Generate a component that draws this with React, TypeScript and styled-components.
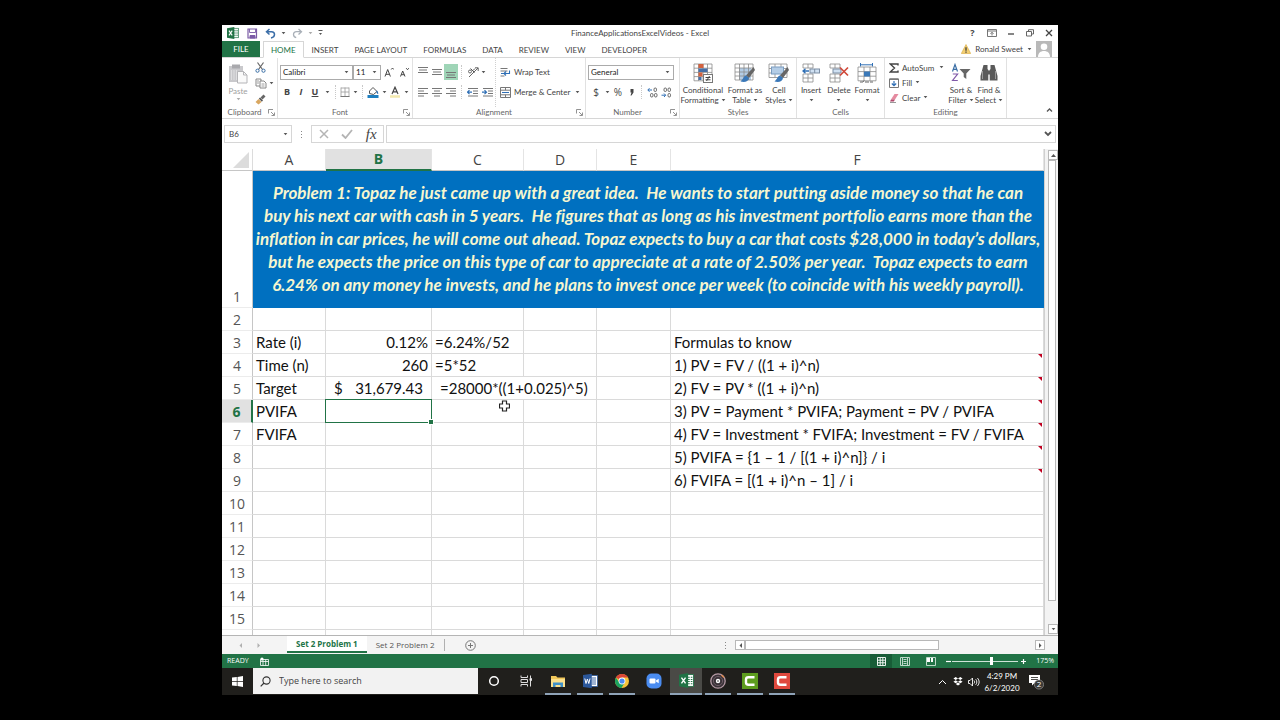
import React from 'react';
import styled, { createGlobalStyle, css } from 'styled-components';

const ribbonFont = "Lato, 'Open Sans', sans-serif";
const uiFont = "'Open Sans', 'Noto Sans', sans-serif";
const green = '#217346';
const line = '#d6d6d6';

const Global = createGlobalStyle`
  *, *::before, *::after { box-sizing: border-box; }
  body { margin: 0; background: #000; font-family: ${ribbonFont}; }
  button, input, select { font: inherit; color: inherit; border: 0; padding: 0; margin: 0; background: none; border-radius: 0; outline: 0; }
  button { cursor: pointer; }
  svg { display: block; flex: none; }
`;

/* ---------- window frame ---------- */

const Screen = styled.main`
  display: flex;
  height: 100vh;
  padding: 25px 222px;
`;

const Desktop = styled.div`
  flex: 1;
  min-width: 0;
  display: flex;
  flex-direction: column;
  background: #fff;
  color: #444;
  font-size: 8px;
  line-height: 10px;
`;

const TitleBar = styled.header`
  display: grid;
  grid-template-columns: 1fr auto 1fr;
  align-items: center;
  height: 16px;
`;

const Title = styled.h1`
  margin: 0;
  font-size: 8px;
  font-weight: 400;
  line-height: 16px;
`;

const QuickAccess = styled.div`
  display: flex;
  align-items: center;
  gap: 2px;
  padding-left: 4px;
`;

const WindowControls = styled.div`
  display: flex;
  justify-content: flex-end;
`;

const Tool = styled.button<{ $w?: number; $active?: boolean; $dim?: boolean }>`
  width: ${p => p.$w ?? 14}px;
  height: 16px;
  display: flex;
  align-items: center;
  justify-content: center;
  background: ${p => (p.$active ? '#9fd5b7' : 'transparent')};
  color: ${p => (p.$dim ? '#b4b4b4' : '#444')};
`;

const GlyphTool = styled(Tool)`
  font-family: ${uiFont};
  font-size: 10px;
`;

const LetterTool = styled(Tool)`
  font-family: ${uiFont};
  font-size: 9px;
`;

/* ---------- ribbon tabs ---------- */

const TabStrip = styled.nav`
  display: flex;
  height: 17px;
  border-bottom: 1px solid ${line};
`;

const FileTab = styled.button`
  width: 38px;
  margin-right: 3px;
  background: ${green};
  color: #fff;
`;

const RibbonTab = styled.button<{ $on?: boolean }>`
  height: 17px;
  padding: 0 7px;
  white-space: nowrap;
  border: 1px solid transparent;
  ${p => p.$on && css`
    color: ${green};
    background: #fff;
    border-color: ${line} ${line} #fff;
  `}
`;

const Account = styled.button`
  display: flex;
  align-items: center;
  gap: 4px;
  height: 16px;
  margin-left: auto;
  padding-right: 6px;
`;

/* ---------- ribbon ---------- */

const Ribbon = styled.div`
  display: flex;
  height: 61px;
  border-bottom: 1px solid ${line};
`;

const Group = styled.section<{ $w: number }>`
  position: relative;
  width: ${p => p.$w}px;
  display: flex;
  flex-direction: column;
  border-right: 1px solid #e1e1e1;
`;

const GroupBody = styled.div<{ $left?: number }>`
  display: flex;
  height: 49px;
  padding-left: ${p => p.$left ?? 0}px;
`;

const GroupLabel = styled.h2<{ $launch?: boolean }>`
  margin: 0;
  padding-right: ${p => (p.$launch ? 10 : 0)}px;
  font-size: 8px;
  font-weight: 400;
  line-height: 11px;
  text-align: center;
  color: #666;
`;

const Launcher = styled.button`
  position: absolute;
  right: 2px;
  bottom: 2px;
  width: 7px;
  height: 7px;
`;

const Rows = styled.div<{ $w?: number; $left?: number; $divided?: boolean }>`
  width: ${p => (p.$w ? `${p.$w}px` : 'auto')};
  padding: 4px 0 0 ${p => p.$left ?? 0}px;
  border-right: ${p => (p.$divided ? '1px dotted #d0d0d0' : '0')};
`;

const ToolRow = styled.div`
  display: flex;
  align-items: center;
  height: 20px;
`;

const Separator = styled.span`
  width: 1px;
  height: 14px;
  margin: 0 3px;
  border-left: 1px dotted #c8c8c8;
`;

const Combo = styled.span<{ $w: number }>`
  position: relative;
  width: ${p => p.$w}px;
  height: 15px;
  border: 1px solid #ababab;
  select {
    width: 100%;
    height: 13px;
    padding-left: 2px;
    appearance: none;
    color: #222;
    line-height: 13px;
  }
  svg {
    position: absolute;
    right: 3px;
    top: 5px;
    pointer-events: none;
  }
`;

const TextTool = styled.button`
  display: flex;
  align-items: center;
  gap: 3px;
  height: 15px;
  white-space: nowrap;
`;

const StackedTools = styled.div`
  width: 58px;
  padding-top: 2px;
`;

const BigButton = styled.button<{ $w: number; $dim?: boolean }>`
  width: ${p => p.$w}px;
  display: flex;
  flex-direction: column;
  align-items: center;
  gap: 2px;
  padding-top: 5px;
  white-space: nowrap;
  line-height: 10px;
  color: ${p => (p.$dim ? '#a0a0a0' : '#444')};
  span { display: flex; align-items: center; justify-content: center; gap: 2px; height: 10px; }
`;

const SmallColumn = styled.div`
  display: flex;
  flex-direction: column;
  padding-top: 2px;
`;

const RibbonEnd = styled.div`
  flex: 1;
  display: flex;
  align-items: flex-end;
  justify-content: flex-end;
  padding-right: 2px;
`;

/* ---------- formula bar ---------- */

const FormulaBar = styled.div`
  display: flex;
  height: 30px;
  padding: 6px 2px;
`;

const NameBox = styled.div`
  position: relative;
  width: 68px;
  height: 18px;
  border: 1px solid ${line};
  input { width: 54px; height: 16px; padding-left: 4px; }
  button { position: absolute; right: 2px; top: 0; width: 8px; height: 16px; display: flex; align-items: center; justify-content: center; }
`;

const Dots = styled.span<{ $w: number }>`
  width: ${p => p.$w}px;
  display: flex;
  align-items: center;
  justify-content: center;
`;

const FormulaButtons = styled.div`
  display: flex;
  align-items: center;
  justify-content: space-around;
  width: 73px;
  height: 18px;
  border: 1px solid ${line};
`;

const FxButton = styled.button`
  width: 20px;
  height: 16px;
  font: italic 400 15px/14px 'Liberation Serif', serif;
  color: #444;
`;

const FormulaInput = styled.div`
  flex: 1;
  display: flex;
  height: 18px;
  margin-left: 2px;
  border: 1px solid ${line};
  input { flex: 1; min-width: 0; }
`;

/* ---------- sheet ---------- */

const SheetArea = styled.div`
  flex: 1;
  min-height: 0;
  display: flex;
  overflow: hidden;
`;

const SheetView = styled.div`
  flex: 1;
  min-width: 0;
  overflow: hidden;
`;

const Grid = styled.table`
  width: 100%;
  table-layout: fixed;
  border-collapse: separate;
  border-spacing: 0;
  font-family: Lato, Carlito, sans-serif;
  font-size: 15px;
  line-height: 22px;
  font-variant-ligatures: none;
  color: #111;
`;

const Corner = styled.th`
  height: 22px;
  padding: 0;
  border-right: 1px solid #dcdcdc;
  border-bottom: 1px solid #c6c6c6;
  svg { margin-left: auto; margin-right: 2px; }
`;

const ColHead = styled.th<{ $on?: boolean }>`
  height: 22px;
  padding: 0;
  font-family: ${uiFont};
  font-size: 14px;
  line-height: 20px;
  font-weight: ${p => (p.$on ? 700 : 400)};
  color: ${p => (p.$on ? green : '#444')};
  background: ${p => (p.$on ? '#e1e1e1' : '#fff')};
  border-right: 1px solid #e4e4e4;
  border-bottom: ${p => (p.$on ? `2px solid ${green}` : '1px solid #c6c6c6')};
`;

const RowHead = styled.th<{ $on?: boolean }>`
  height: 23px;
  padding: 0;
  vertical-align: bottom;
  text-align: center;
  font-family: ${uiFont};
  font-size: 14px;
  line-height: 20px;
  font-weight: ${p => (p.$on ? 700 : 400)};
  color: ${p => (p.$on ? green : '#555')};
  background: ${p => (p.$on ? '#e1e1e1' : '#fff')};
  border-right: ${p => (p.$on ? `2px solid ${green}` : '1px solid #c6c6c6')};
  border-bottom: 1px solid #ececec;
`;

const Cell = styled.td<{ $align?: string; $note?: boolean; $indent?: boolean }>`
  position: relative;
  height: 23px;
  padding: 0 3px 0 ${p => (p.$indent ? 8 : 3)}px;
  white-space: nowrap;
  text-align: ${p => p.$align ?? 'left'};
  border-right: 1px solid #dadada;
  border-bottom: 1px solid #dadada;
  ${p => p.$note && css`
    &::after {
      content: '';
      position: absolute;
      top: 0;
      right: 1px;
      border: 2px solid #c00020;
      border-left-color: transparent;
      border-bottom-color: transparent;
    }
  `}
`;

const Accounting = styled.span`
  display: flex;
  justify-content: space-between;
  padding: 0 5px;
`;

const Problem = styled.td`
  height: 137px;
  padding: 0 0 2px;
  background: #0070c0;
  color: #f6f6cf;
  font-size: 17px;
  font-weight: 700;
  font-style: italic;
  line-height: 23px;
  text-align: center;
  white-space: nowrap;
  border-right: 1px solid #0070c0;
  span { display: block; white-space: pre; }
`;

const Selection = styled.div`
  position: absolute;
  z-index: 1;
  inset: -1px;
  border: 1px solid ${green};
  &::after {
    content: '';
    position: absolute;
    right: -2px;
    bottom: -2px;
    width: 4px;
    height: 4px;
    background: ${green};
    outline: 1px solid #fff;
  }
`;

const Pointer = styled.svg`
  position: absolute;
  left: 67px;
  top: 0;
`;

const VScroll = styled.div`
  width: 14px;
  display: flex;
  flex-direction: column;
  padding: 1px 2px 1px 3px;
  background: #f3f3f3;
  border-left: 1px solid #d0d0d0;
`;

const ScrollButton = styled.button`
  width: 10px;
  height: 10px;
  flex: none;
  display: flex;
  align-items: center;
  justify-content: center;
  border: 1px solid #b8b8b8;
  background: #fff;
`;

const Track = styled.div<{ $dir: 'row' | 'column' }>`
  flex: 1;
  display: flex;
  flex-direction: ${p => p.$dir};
`;

const Thumb = styled.div<{ $part: number }>`
  flex: 0 0 ${p => p.$part}%;
  background: #fff;
  border: 1px solid #b8b8b8;
`;

/* ---------- sheet tabs and status ---------- */

const SheetTabs = styled.div`
  display: flex;
  align-items: center;
  height: 19px;
  background: #f4f4f4;
  border-top: 1px solid #b5b5b5;
  font-family: ${uiFont};
`;

const TabArrows = styled.div`
  width: 65px;
  display: flex;
  gap: 4px;
  padding-left: 12px;
`;

const SheetTab = styled.button<{ $on?: boolean }>`
  align-self: flex-start;
  height: 17px;
  padding: 0 9px;
  white-space: nowrap;
  ${p => p.$on
    ? css`background: #fff; color: ${green}; font-weight: 700; border-bottom: 2px solid ${green};`
    : css`color: #555;`}
`;

const HScroll = styled.div`
  width: 310px;
  height: 10px;
  display: flex;
  margin-right: 13px;
`;

const StatusBar = styled.footer`
  display: flex;
  align-items: center;
  height: 14px;
  padding: 0 4px 0 5px;
  background: ${green};
  color: #fff;
  font-size: 7px;
  font-family: ${uiFont};
`;

const StatusButton = styled.button<{ $w: number; $on?: boolean }>`
  width: ${p => p.$w}px;
  height: 14px;
  display: flex;
  align-items: center;
  justify-content: center;
  background: ${p => (p.$on ? '#185c37' : 'transparent')};
`;

const ZoomRange = styled.input`
  width: 66px;
  height: 9px;
  appearance: none;
  background: linear-gradient(#cfe3d8, #cfe3d8) center / 100% 1px no-repeat;
  &::-webkit-slider-thumb { appearance: none; width: 3px; height: 8px; background: #fff; }
`;

const ZoomValue = styled.span`
  width: 26px;
  text-align: right;
`;

/* ---------- taskbar ---------- */

const Taskbar = styled.div`
  display: flex;
  height: 27px;
  background: #201f1c;
  color: #fff;
`;

const StartButton = styled.button`
  width: 31px;
  display: flex;
  align-items: center;
  justify-content: center;
`;

const SearchBox = styled.label`
  display: flex;
  align-items: center;
  width: 225px;
  padding-left: 7px;
  gap: 8px;
  height: 26px;
  background: #f2f2f2;
  color: #333;
  input { flex: 1; min-width: 0; font-family: ${uiFont}; font-size: 9px; }
  input::placeholder { color: #444; opacity: 1; }
`;

const TaskButton = styled.button<{ $open?: boolean; $on?: boolean }>`
  width: 32px;
  display: flex;
  flex-direction: column;
  align-items: center;
  justify-content: space-between;
  padding-top: 5px;
  background: ${p => (p.$on ? '#4a4a46' : 'transparent')};
  &::after {
    content: '';
    width: ${p => (p.$on ? 32 : 26)}px;
    height: 2px;
    background: ${p => (p.$open ? '#8fa3b8' : 'transparent')};
  }
`;

const Tray = styled.div`
  display: flex;
  align-items: center;
  margin-left: auto;
  padding-right: 8px;
`;

const TrayButton = styled.button<{ $w: number }>`
  width: ${p => p.$w}px;
  height: 20px;
  display: flex;
  align-items: center;
  justify-content: center;
`;

const Clock = styled.time`
  width: 40px;
  text-align: center;
  line-height: 12px;
  font-size: 8px;
`;

/* ---------- icons ---------- */

type IconProps = { w?: number; h?: number; vb?: string; c?: string; children?: React.ReactNode };
const Ico = ({ w = 12, h = 12, vb, c = '#666', children }: IconProps) => (
  <svg width={w} height={h} viewBox={vb ?? `0 0 ${w} ${h}`} fill="none" stroke={c} strokeWidth="1" aria-hidden="true">{children}</svg>
);
const Caret = ({ c = '#555' }: { c?: string }) => (
  <svg width="5" height="3" viewBox="0 0 5 3" aria-hidden="true"><path d="M0.7 0h3.600L2.500 2.300z" fill={c} /></svg>
);
const LaunchIcon = () => <Ico w={7} h={7} c="#777"><path d="M.5 4.500V.5H5M3 3l3 3M6.500 3.500v3h-3" strokeWidth=".8" /></Ico>;
const ExcelIcon = ({ s = 12 }: { s?: number }) => (
  <Ico w={s} h={s} vb="0 0 14 14" c="none">
    <rect x="7" y="1.500" width="6.500" height="11" fill="#fff" stroke={green} strokeWidth=".8" />
    <path d="M8.500 4h1.500M11 4h1.500M8.500 6h1.500M11 6h1.500M8.500 8h1.500M11 8h1.500M8.500 10h1.500M11 10h1.500" stroke={green} />
    <path d="M0 1.600L8.500 0v14L0 12.400z" fill={green} />
    <path d="M2.300 4.300l3.800 5.400M6.100 4.300L2.300 9.700" stroke="#fff" strokeWidth="1.300" />
  </Ico>
);
const SaveIcon = () => (
  <Ico w={11} h={11} c="#7b5ba6"><path d="M1 1h8.500v9H1z" strokeWidth="1.200" /><path d="M2.500 1v3.500h6V1" strokeWidth=".9" /><path d="M3 7.500h5V10H3z" fill="#7b5ba6" /></Ico>
);
const UndoIcon = () => <Ico w={11} h={11} c="#3b6ea8"><path d="M4.500 1L1.500 3.700l3 2.800M2 3.700h4.500c2 0 3 1.200 3 2.800 0 2-1.500 3-3.500 3.500" strokeWidth="1.500" /></Ico>;
const RedoIcon = () => <Ico w={11} h={11} c="#a9b0b8"><path d="M6.500 1l3 2.700-3 2.800M9 3.700H4.500c-2 0-3 1.200-3 2.800 0 1.700 1 2.700 2.700 3.200" strokeWidth="1.300" /></Ico>;
const Lines = ({ rows, y = 0 }: { rows: [number, number][]; y?: number }) => (
  <Ico w={10} h={13} c="#777">{rows.map(([a, b], i) => <path key={i} d={`M${a} ${y + 1.5 + i * 2.5}H${b}`} />)}</Ico>
);
const IndentIcon = ({ right }: { right?: boolean }) => (
  <Ico w={12} h={11} c="#777">
    <path d="M1 1.500h10M6 4h5M6 6.500h5M1 9h10" />
    <path d={right ? 'M0 5.200h4M2.500 3.200l2 2-2 2' : 'M5 5.200H1M2.500 3.200l-2 2 2 2'} stroke="#2f6fb5" strokeWidth="1.200" />
  </Ico>
);
const Cells = ({ x = 0, y = 0, cols = 3, rows = 3, cw = 5, ch = 4 }) => (
  <path stroke="#8a8a8a" strokeWidth=".8" d={
    Array.from({ length: cols + 1 }, (_, i) => `M${x + i * cw} ${y}v${rows * ch}`).join('') +
    Array.from({ length: rows + 1 }, (_, i) => `M${x} ${y + i * ch}h${cols * cw}`).join('')} />
);
const Brush = () => (
  <g stroke="none"><path d="M19.500 4l-7.500 8.500 3 2.500 6-8z" fill="#666" /><path d="M12 12.500c-2.500.5-2.500 3.500-5.500 6 4 1.200 8 .2 8.500-3.500z" fill="#3a78b8" /></g>
);
const PasteIcon = () => (
  <Ico w={20} h={21} c="none">
    <rect x="1" y="3" width="14" height="16" fill="#c9c9cc" /><rect x="4" y="1.500" width="8" height="4" fill="#a9a9ad" />
    <path d="M3.500 7v10M6 7v10M8.500 7v10" stroke="#dedee0" />
    <path d="M9.500 8.500h6l3.500 3.500v8H9.500z" fill="#fafafa" stroke="#b5b5b8" /><path d="M15.500 8.500V12H19" stroke="#b5b5b8" />
  </Ico>
);
const CutIcon = () => <Ico w={11} h={11}><path d="M2.500 0.500l5 7M8.500 0.500l-5 7" stroke="#666" strokeWidth="1.200" /><circle cx="2.500" cy="8.700" r="1.600" stroke="#3a6ea5" /><circle cx="8.500" cy="8.700" r="1.600" stroke="#3a6ea5" /></Ico>;
const CopyIcon = () => <Ico w={12} h={11} c="#888"><path d="M1 1h5v7H1z" fill="#fff" /><path d="M5 3h4l2 2v5H5z" fill="#fff" /><path d="M6.500 6h3M6.500 8h3M2 3h2M2 5h2" strokeWidth=".8" /></Ico>;
const PainterIcon = () => <Ico w={11} h={11} c="none"><path d="M8.500 0.500l2 2-3 3-2-2z" fill="#666" /><path d="M5 3.500l3 3-1.200 1.300-3-3z" fill="#555" /><path d="M3.500 5l3 3-3 2.500-3-2.500z" fill="#d9a760" /></Ico>;
const CondIcon = () => (
  <Ico w={20} h={20}><Cells x={1} y={1} cols={4} rows={4} cw={4.5} ch={4.2} /><path d="M5.500 1h5v4h-5z" fill="#d3623f" stroke="none" /><path d="M5.500 5.500h9v3.500h-9z" fill="#456fa8" stroke="none" /><path d="M5.500 9.500h4v4h-4z" fill="#d3623f" stroke="none" /><path d="M5.500 14h3v3h-3z" fill="#456fa8" stroke="none" /><rect x="10.500" y="11.500" width="9" height="8" fill="#fff" stroke="#777" /><path d="M12.500 14.500h5M12.500 16.800h5M16.500 13l-3 5" stroke="#444" /></Ico>
);
const TableIcon = () => <Ico w={22} h={20}><rect x="5" y="5" width="12" height="12" fill="#b4cde6" stroke="none" /><Cells x={1} y={1} cols={4} rows={4} cw={4.5} ch={4} /><Brush /></Ico>;
const StylesIcon = () => <Ico w={22} h={20}><Cells x={1} y={1} cols={3} rows={3} cw={6} ch={4.5} /><rect x="3.500" y="4" width="12" height="7" fill="#b4cde6" stroke="#7a9cc0" /><Brush /></Ico>;
const InsertIcon = () => <Ico w={20} h={20}><Cells x={2} y={1} cols={2} rows={1} cw={5} ch={4} /><Cells x={2} y={11} cols={2} rows={2} cw={5} ch={4} /><rect x="9" y="6" width="9.500" height="4" fill="#cfe0f2" stroke="#7d8ea3" /><path d="M13.700 6v4" stroke="#7d8ea3" /><path d="M8 8H2M4.500 5.700L2 8l2.500 2.300" stroke="#2f6fb5" strokeWidth="1.300" /></Ico>;
const DeleteIcon = () => <Ico w={20} h={20}><Cells x={1} y={1} cols={2} rows={1} cw={5} ch={4} /><Cells x={1} y={11} cols={2} rows={2} cw={5} ch={4} /><rect x="4" y="6" width="8" height="4" fill="#cfe0f2" stroke="#7d8ea3" /><path d="M11 4.500l8 8M19 4.500l-8 8" stroke="#d0493a" strokeWidth="1.700" /></Ico>;
const FormatIcon = () => <Ico w={20} h={20}><path d="M3.500 0v3.500M15.500 0v3.500M3.500 1.800h12" stroke="#2f6fb5" /><Cells x={1} y={4} cols={3} rows={3} cw={6} ch={4.6} /><rect x="7" y="8.500" width="6" height="5" fill="#3a78b8" stroke="none" /><path d="M3 19h3l1-1.500M8 19h4M13 19h3" /></Ico>;
const SortIcon = () => <Ico w={20} h={20}><path d="M1.500 8.500L4 1.500l2.500 7M2.300 6.300h3.500" stroke="#3a6ea5" strokeWidth="1.200" /><path d="M1.800 11h4.800l-5 6.500h5.200" stroke="#8059a8" strokeWidth="1.200" /><path d="M8.500 6H19.500l-4.200 4.500v5.500l-2.600-2v-3.500z" fill="#666" stroke="none" /></Ico>;
const FindIcon = () => <Ico w={20} h={20} c="none"><path d="M4.500 2h4v4l.8 1v10.500H1.500V13z M15.500 2h-4v4l-.8 1v10.500h7.800V13z" fill="#5a5a5a" /><path d="M8.500 7.500h3v4h-3z" fill="#5a5a5a" /><path d="M3.500 8v8M16.500 8v8" stroke="#9a9a9a" /></Ico>;
const WarnIcon = () => <Ico w={10} h={10} c="none"><path d="M5 .5L9.700 9.500H.3z" fill="#f3cf74" stroke="#d9a93a" strokeWidth=".6" /><path d="M5 3.300v3.500M5 7.500v1.200" stroke="#333" strokeWidth="1.200" /></Ico>;
const Avatar = () => <Ico w={16} h={16} c="none"><rect width="16" height="16" fill="#b9b9b9" /><circle cx="8" cy="5.800" r="3.300" fill="#fff" /><path d="M2 16c0-4 2.500-6 6-6s6 2 6 6z" fill="#fff" /></Ico>;

const FolderIcon = () => <Ico w={16} h={16} c="none"><path d="M1 3h5l1.500 1.500H15V14H1z" fill="#f0c75a" /><path d="M1 6h14v8H1z" fill="#fbe08d" /><path d="M3 9.500h10V14h-2.500v-2h-5v2H3z" fill="#3f90c8" /></Ico>;
const WordIcon = () => <Ico w={15} h={16} c="none"><rect x="7" y="2.500" width="7.500" height="11" fill="#fff" stroke="#2b579a" strokeWidth=".8" /><path d="M9 5h4M9 7h4M9 9h4M9 11h4" stroke="#2b579a" strokeWidth=".9" /><path d="M0 2L8.800 .8v14.400L0 14z" fill="#2b579a" /><path d="M1.800 5.500l1.200 5 1.400-4.500 1.400 4.500 1.200-5" stroke="#fff" strokeWidth="1" /></Ico>;
const ChromeIcon = () => <Ico w={16} h={16} c="none"><circle cx="8" cy="8" r="7" fill="#f5c33b" /><path d="M8 8L1.900 4.600A7 7 0 0 1 14.100 4.600H8z" fill="#db4437" /><path d="M1.900 4.600A7 7 0 0 0 7.500 15L10.700 9.500 8 8 5 9z" fill="#1aa260" /><circle cx="8" cy="8" r="3.400" fill="#fff" /><circle cx="8" cy="8" r="2.600" fill="#4a8af4" /></Ico>;
const ZoomIcon = () => <Ico w={16} h={16} c="none"><rect x=".5" y=".5" width="15" height="15" rx="5" fill="#4a8cf0" /><rect x="3.500" y="5.500" width="6" height="5" rx="1" fill="#fff" /><path d="M10 7.500l2.700-1.800v4.600L10 8.500z" fill="#fff" /></Ico>;
const DiscIcon = () => <Ico w={16} h={16} c="none"><circle cx="8" cy="8" r="7.200" fill="#3a3338" stroke="#b59aa5" strokeWidth="1.300" /><circle cx="8" cy="8" r="4.600" stroke="#6d5a64" /><circle cx="8" cy="8" r="2.200" fill="#fff" /><circle cx="8" cy="8" r=".8" fill="#3a3338" /><path d="M11.500 2l2.500 2.500" stroke="#e08a50" strokeWidth="1.400" /></Ico>;
const CamIcon = ({ c }: { c: string }) => <Ico w={16} h={16} c="none"><rect width="16" height="16" fill={c} /><path d="M12.500 4.300H6.500Q4 4.300 4 6.500v3q0 2.200 2.500 2.200h6" stroke="#fff" strokeWidth="2.400" /></Ico>;

/* ---------- data ---------- */

const problemLines = [
  'Problem 1: Topaz he just came up with a great idea.  He wants to start putting aside money so that he can',
  'buy his next car with cash in 5 years.  He figures that as long as his investment portfolio earns more than the',
  'inflation in car prices, he will come out ahead. Topaz expects to buy a car that costs $28,000 in today’s dollars,',
  'but he expects the price on this type of car to appreciate at a rate of 2.50% per year.  Topaz expects to earn',
  '6.24% on any money he invests, and he plans to invest once per week (to coincide with his weekly payroll).',
];

type SheetRow = { a?: string; b?: string; c?: string; f?: string; money?: boolean };
const rows: Record<number, SheetRow> = {
  3: { a: 'Rate (i)', b: '0.12%', c: '=6.24%/52', f: 'Formulas to know' },
  4: { a: 'Time (n)', b: '260', c: '=5*52', f: '1) PV = FV / ((1 + i)^n)' },
  5: { a: 'Target', b: '31,679.43', c: '=28000*((1+0.025)^5)', f: '2) FV = PV * ((1 + i)^n)', money: true },
  6: { a: 'PVIFA', f: '3) PV = Payment * PVIFA; Payment = PV / PVIFA' },
  7: { a: 'FVIFA', f: '4) FV = Investment * FVIFA; Investment = FV / FVIFA' },
  8: { f: '5) PVIFA = {1 – 1 / [(1 + i)^n]} / i' },
  9: { f: '6) FVIFA = [(1 + i)^n – 1] / i' },
};
const lastNumberedRow = 15;

/* ---------- ribbon groups ---------- */

const ClipboardGroup = () => (
  <Group $w={56}>
    <GroupBody>
      <BigButton $w={32} $dim><PasteIcon /><span>Paste</span><Caret c="#aaa" /></BigButton>
      <SmallColumn>
        <Tool $w={12} aria-label="Cut"><CutIcon /></Tool>
        <Tool $w={22} aria-label="Copy"><CopyIcon /><Tool as="span" $w={8}><Caret /></Tool></Tool>
        <Tool $w={12} aria-label="Format Painter"><PainterIcon /></Tool>
      </SmallColumn>
    </GroupBody>
    <GroupLabel $launch>Clipboard</GroupLabel>
    <Launcher aria-label="Clipboard options"><LaunchIcon /></Launcher>
  </Group>
);

const FontGroup = () => (
  <Group $w={135}>
    <GroupBody>
      <Rows $left={2}>
        <ToolRow>
          <Combo $w={73}><select aria-label="Font"><option>Calibri</option></select><Caret /></Combo>
          <Combo $w={28}><select aria-label="Font size"><option>11</option></select><Caret /></Combo>
          <Tool $w={16} aria-label="Increase font size"><Ico w={10} h={10} c="#444"><path d="M1 9.500l2.700-7 2.700 7M2 7.300h3.500M7.200 2.500L8.500 1l1.300 1.500" /></Ico></Tool>
          <Tool $w={14} aria-label="Decrease font size"><Ico w={10} h={10} c="#444"><path d="M1.500 9.500l2.200-5.500L6 9.500M2.300 7.700h3M7.200 1.200l1.300 1.500 1.300-1.500" /></Ico></Tool>
        </ToolRow>
        <ToolRow>
          <LetterTool aria-label="Bold"><b>B</b></LetterTool>
          <LetterTool aria-label="Italic"><b><i>I</i></b></LetterTool>
          <LetterTool aria-label="Underline"><b><u>U</u></b></LetterTool>
          <Tool $w={10} aria-label="Underline options"><Caret /></Tool>
          <Separator />
          <Tool $w={12} aria-label="Borders"><Ico w={10} h={10} c="#999"><path d="M1 .5v9M5 .5v9M9 .5v9M1 1h8M1 5h8" strokeWidth=".8" /><path d="M.5 9.500h9" stroke="#777" /></Ico></Tool>
          <Tool $w={8} aria-label="Border options"><Caret /></Tool>
          <Separator />
          <Tool aria-label="Fill Color"><Ico w={12} h={12}><path d="M2.500 5l3.500-3.500 4 4-3.500 3-4-1z" fill="#fff" stroke="#555" /><path d="M9.500 5c1 1 1.200 1.700 1.200 2.800" stroke="#2f6fb5" strokeWidth="1.300" /><path d="M.5 10.500h11" stroke="#1f7fc0" strokeWidth="3" /></Ico></Tool>
          <Tool $w={8} aria-label="Fill Color options"><Caret /></Tool>
          <Tool aria-label="Font Color"><Ico w={12} h={12}><path d="M3 8L6 1.200 9 8M4 5.800h4" stroke="#444" strokeWidth="1.200" /><path d="M1 10.500h10" stroke="#f3e9ae" strokeWidth="2.500" /></Ico></Tool>
          <Tool $w={8} aria-label="Font Color options"><Caret /></Tool>
        </ToolRow>
      </Rows>
    </GroupBody>
    <GroupLabel $launch>Font</GroupLabel>
    <Launcher aria-label="Font options"><LaunchIcon /></Launcher>
  </Group>
);

const AlignmentGroup = () => (
  <Group $w={173}>
    <GroupBody>
      <Rows $w={83} $left={3} $divided>
        <ToolRow>
          <Tool aria-label="Top Align"><Lines rows={[[0, 10], [1, 9], [0, 10]]} /></Tool>
          <Tool aria-label="Middle Align"><Lines rows={[[0, 10], [1, 9], [0, 10]]} y={2} /></Tool>
          <Tool aria-label="Bottom Align" $active><Lines rows={[[0, 10], [1, 9], [0, 10]]} y={5} /></Tool>
          <Separator />
          <Tool $w={15} aria-label="Orientation"><Ico w={12} h={12}><path d="M2 11L11 2M8 1.800h3.200V5" /><circle cx="3" cy="5.500" r="1.500" /><path d="M3.500 2.500l4 4M6 4.500l2-2" stroke="#555" /></Ico></Tool>
          <Tool $w={6} aria-label="Orientation options"><Caret /></Tool>
        </ToolRow>
        <ToolRow>
          <Tool aria-label="Align Left"><Lines rows={[[0, 10], [0, 6], [0, 10], [0, 6]]} y={1} /></Tool>
          <Tool aria-label="Center"><Lines rows={[[0, 10], [2, 8], [0, 10], [2, 8]]} y={1} /></Tool>
          <Tool aria-label="Align Right"><Lines rows={[[0, 10], [4, 10], [0, 10], [4, 10]]} y={1} /></Tool>
          <Separator />
          <Tool $w={15} aria-label="Decrease Indent"><IndentIcon /></Tool>
          <Tool $w={15} aria-label="Increase Indent"><IndentIcon right /></Tool>
        </ToolRow>
      </Rows>
      <Rows $left={4}>
        <ToolRow>
          <TextTool><Ico w={11} h={11} c="#777"><path d="M.5 1.500h7M.5 4h7M.5 9h4" /><path d="M1 6.500h8.500V3.500M6 4.500l-2 2 2 2" stroke="#2f6fb5" strokeWidth="1.100" /></Ico>Wrap Text</TextTool>
        </ToolRow>
        <ToolRow>
          <TextTool><Ico w={11} h={11} c="#777"><path d="M.5 .5h10v10H.5zM.5 3.200h10M.5 7.800h10M5.500 .5v2.700M5.500 7.800v2.700" /><path d="M2 5.500h7" stroke="#2f6fb5" /></Ico>Merge &amp; Center</TextTool>
          <Tool aria-label="Merge options"><Caret /></Tool>
        </ToolRow>
      </Rows>
    </GroupBody>
    <GroupLabel $launch>Alignment</GroupLabel>
    <Launcher aria-label="Alignment options"><LaunchIcon /></Launcher>
  </Group>
);

const NumberGroup = () => (
  <Group $w={94}>
    <GroupBody>
      <Rows $left={2}>
        <ToolRow><Combo $w={86}><select aria-label="Number format"><option>General</option></select><Caret /></Combo></ToolRow>
        <ToolRow>
          <GlyphTool $w={16} aria-label="Accounting format">$</GlyphTool>
          <Tool $w={6} aria-label="Currency options"><Caret /></Tool>
          <GlyphTool $w={16} aria-label="Percent Style">%</GlyphTool>
          <Tool $w={12} aria-label="Comma Style"><Ico w={4} h={7} c="none"><path d="M.5 0h3v3.500L1.500 6.500H.5l1-3h-1z" fill="#444" /></Ico></Tool>
          <Separator />
          <Tool aria-label="Increase Decimal"><Ico w={11} h={11}><path d="M5 3H1M2.500 1.200L.8 3l1.700 1.800" stroke="#2f6fb5" /><rect x="7" y="1" width="2.500" height="3.500" rx="1.200" /><rect x="3.500" y="6.500" width="2.500" height="3.500" rx="1.200" /><rect x="7.500" y="6.500" width="2.500" height="3.500" rx="1.200" /></Ico></Tool>
          <Tool aria-label="Decrease Decimal"><Ico w={11} h={11}><rect x="3" y="1" width="2.500" height="3.500" rx="1.200" /><rect x="7" y="1" width="2.500" height="3.500" rx="1.200" /><path d="M.5 8.200h4M3 6.500l1.700 1.700L3 10" stroke="#2f6fb5" /><rect x="7" y="6.500" width="2.500" height="3.500" rx="1.200" /></Ico></Tool>
        </ToolRow>
      </Rows>
    </GroupBody>
    <GroupLabel $launch>Number</GroupLabel>
    <Launcher aria-label="Number options"><LaunchIcon /></Launcher>
  </Group>
);

const StylesGroup = () => (
  <Group $w={117}>
    <GroupBody $left={1}>
      <BigButton $w={44}><CondIcon /><div><span>Conditional</span><span>Formatting <Caret /></span></div></BigButton>
      <BigButton $w={40}><TableIcon /><div><span>Format as</span><span>Table <Caret /></span></div></BigButton>
      <BigButton $w={28}><StylesIcon /><div><span>Cell</span><span>Styles <Caret /></span></div></BigButton>
    </GroupBody>
    <GroupLabel>Styles</GroupLabel>
  </Group>
);

const CellsGroup = () => (
  <Group $w={88}>
    <GroupBody>
      <BigButton $w={28}><InsertIcon /><div><span>Insert</span><span><Caret /></span></div></BigButton>
      <BigButton $w={28}><DeleteIcon /><div><span>Delete</span><span><Caret /></span></div></BigButton>
      <BigButton $w={28}><FormatIcon /><div><span>Format</span><span><Caret /></span></div></BigButton>
    </GroupBody>
    <GroupLabel>Cells</GroupLabel>
  </Group>
);

const EditingGroup = () => (
  <Group $w={122}>
    <GroupBody $left={4}>
      <StackedTools>
        <TextTool><Ico w={10} h={10} c="#444"><path d="M9 2.500V1H1.200L5.500 5 1.200 9H9V7.500" strokeWidth="1.400" /></Ico>AutoSum <Tool as="span" $w={8}><Caret /></Tool></TextTool>
        <TextTool><Ico w={10} h={10} c="#777"><path d="M.5 1h9v8.500h-9z" /><path d="M.5 1.200h9" strokeWidth="1.500" /><path d="M5 3v4.500M2.800 5.500L5 7.700l2.200-2.200" stroke="#2f6fb5" strokeWidth="1.200" /></Ico>Fill <Caret /></TextTool>
        <TextTool><Ico w={10} h={10} c="none"><path d="M5.500 1h4L6 6.500H2z" fill="#e58aa0" /><path d="M2 6.500h4L4.800 8.500H1z" fill="#b0476a" /><path d="M1 9.500h6" stroke="#999" /></Ico>Clear <Caret /></TextTool>
      </StackedTools>
      <BigButton $w={28}><SortIcon /><div><span>Sort &amp;</span><span>Filter <Caret /></span></div></BigButton>
      <BigButton $w={28}><FindIcon /><div><span>Find &amp;</span><span>Select <Caret /></span></div></BigButton>
    </GroupBody>
    <GroupLabel>Editing</GroupLabel>
  </Group>
);

/* ---------- worksheet ---------- */

const DataRow = ({ n }: { n: number }) => {
  const r = rows[n] ?? {};
  return (
    <tr>
      <RowHead scope="row" $on={n === 6}>{n <= lastNumberedRow ? n : null}</RowHead>
      <Cell>{r.a}</Cell>
      <Cell $align="right">
        {r.money ? <Accounting><span>$</span><span>{r.b}</span></Accounting> : r.b}
        {n === 6 && <Selection />}
      </Cell>
      <Cell colSpan={r.money ? 2 : 1} $indent={r.money}>
        {r.c}
        {n === 6 && (
          <Pointer width="11" height="12" viewBox="0 0 11 12" fill="#fff" stroke="#222" strokeWidth="1.200" aria-hidden="true">
            <path d="M3.500 1h4v3h3v4h-3v3h-4V8h-3V4h3z" />
          </Pointer>
        )}
      </Cell>
      {!r.money && <Cell />}
      <Cell />
      <Cell $note={n >= 4 && n <= 9}>{r.f}</Cell>
    </tr>
  );
};

const Worksheet = () => (
  <SheetArea>
    <SheetView>
      <Grid>
        <colgroup>
          <col style={{ width: 31 }} /><col style={{ width: 73 }} /><col style={{ width: 106 }} />
          <col style={{ width: 92 }} /><col style={{ width: 73 }} /><col style={{ width: 74 }} /><col />
        </colgroup>
        <thead>
          <tr>
            <Corner><Ico w={17} h={16} c="none"><path d="M16 0v16H0z" fill="#dcdcdc" /></Ico></Corner>
            {'ABCDEF'.split('').map(l => <ColHead key={l} scope="col" $on={l === 'B'}>{l}</ColHead>)}
          </tr>
        </thead>
        <tbody>
          <tr>
            <RowHead scope="row">1</RowHead>
            <Problem colSpan={6}>{problemLines.map(t => <span key={t}>{t}</span>)}</Problem>
          </tr>
          {Array.from({ length: 15 }, (_, i) => <DataRow key={i} n={i + 2} />)}
        </tbody>
      </Grid>
    </SheetView>
    <VScroll>
      <ScrollButton aria-label="Scroll up"><Ico w={5} h={3} c="none"><path d="M0 3h5L2.500 0z" fill="#555" /></Ico></ScrollButton>
      <Track $dir="column"><Thumb $part={95} /></Track>
      <ScrollButton aria-label="Scroll down"><Caret /></ScrollButton>
    </VScroll>
  </SheetArea>
);

const VDots = () => <Ico w={3} h={9} c="none"><path d="M1 1h1v1H1zM1 4h1v1H1zM1 7h1v1H1z" fill="#888" /></Ico>;
const Grow = styled.span`flex: 1;`;
const TabDivider = styled.span`width: 1px; height: 12px; margin-right: 17px; background: #b0b0b0;`;

export default function App() {
  return (
    <Screen>
      <Global />
      <Desktop>
        <TitleBar>
          <QuickAccess>
            <Tool aria-label="Excel"><ExcelIcon /></Tool>
            <Tool $w={20} aria-label="Save"><SaveIcon /></Tool>
            <Tool $w={12} aria-label="Undo"><UndoIcon /></Tool>
            <Tool $w={10} aria-label="Undo list"><Caret /></Tool>
            <Tool $w={14} aria-label="Redo"><RedoIcon /></Tool>
            <Tool $w={8} aria-label="Redo list"><Caret c="#aaa" /></Tool>
            <Tool $w={8} aria-label="Customize toolbar"><Ico w={5} h={6} c="none"><path d="M.5 0h4v1h-4zM1 3h3L2.500 5z" fill="#555" /></Ico></Tool>
          </QuickAccess>
          <Title>FinanceApplicationsExcelVideos - Excel</Title>
          <WindowControls>
            <LetterTool $w={19} aria-label="Help"><b>?</b></LetterTool>
            <Tool $w={19} aria-label="Ribbon display"><Ico w={10} h={8}><path d="M.5 .5h9v7h-9zM.5 2h9M5 6.500V3.500M3.500 4.800L5 3.300l1.500 1.500" strokeWidth=".9" /></Ico></Tool>
            <Tool $w={19} aria-label="Minimize"><Ico w={8} h={8} c="#444"><path d="M1 5h6" strokeWidth="1.300" /></Ico></Tool>
            <Tool $w={19} aria-label="Restore"><Ico w={8} h={8}><path d="M.5 2.500h5v4.500h-5zM2.500 2.500V.7h5V5h-2" /></Ico></Tool>
            <Tool $w={19} aria-label="Close"><Ico w={8} h={8} c="#444"><path d="M1 1l6 6M7 1L1 7" strokeWidth="1.300" /></Ico></Tool>
          </WindowControls>
        </TitleBar>

        <TabStrip>
          <FileTab>FILE</FileTab>
          <RibbonTab $on>HOME</RibbonTab>
          {['INSERT', 'PAGE LAYOUT', 'FORMULAS', 'DATA', 'REVIEW', 'VIEW', 'DEVELOPER'].map(t => <RibbonTab key={t}>{t}</RibbonTab>)}
          <Account><WarnIcon />Ronald Sweet <Caret /><Avatar /></Account>
        </TabStrip>

        <Ribbon>
          <ClipboardGroup />
          <FontGroup />
          <AlignmentGroup />
          <NumberGroup />
          <StylesGroup />
          <CellsGroup />
          <EditingGroup />
          <RibbonEnd><Tool aria-label="Collapse ribbon" $w={14}><Ico w={7} h={6} c="#555"><path d="M1 4.500L3.500 2 6 4.500" strokeWidth="1.300" /></Ico></Tool></RibbonEnd>
        </Ribbon>

        <FormulaBar>
          <NameBox>
            <input aria-label="Name box" defaultValue="B6" />
            <button aria-label="Name list"><Caret /></button>
          </NameBox>
          <Dots $w={19}><VDots /></Dots>
          <FormulaButtons>
            <Tool $w={20} aria-label="Cancel"><Ico w={10} h={10} c="#b4b4b4"><path d="M1 1l8 8M9 1L1 9" strokeWidth="1.500" /></Ico></Tool>
            <Tool $w={20} aria-label="Enter"><Ico w={12} h={10} c="#b4b4b4"><path d="M1 5.500L4.500 9 11 1" strokeWidth="1.800" /></Ico></Tool>
            <FxButton aria-label="Insert function">fx</FxButton>
          </FormulaButtons>
          <FormulaInput>
            <input aria-label="Formula" />
            <Tool aria-label="Expand formula bar"><Ico w={8} h={6} c="#555"><path d="M1 1l3 3 3-3" strokeWidth="1.800" /></Ico></Tool>
          </FormulaInput>
        </FormulaBar>

        <Worksheet />

        <SheetTabs>
          <TabArrows>
            <Tool aria-label="Previous sheet"><Ico w={4} h={5} c="none"><path d="M3 0v5L.5 2.500z" fill="#b0b0b0" /></Ico></Tool>
            <Tool aria-label="Next sheet"><Ico w={4} h={5} c="none"><path d="M.5 0v5L3 2.500z" fill="#b0b0b0" /></Ico></Tool>
          </TabArrows>
          <SheetTab $on>Set 2 Problem 1</SheetTab>
          <SheetTab>Set 2 Problem 2</SheetTab>
          <TabDivider />
          <Tool $w={18} aria-label="New sheet"><Ico w={11} h={11} c="#777"><circle cx="5.500" cy="5.500" r="4.800" /><path d="M5.500 3v5M3 5.500h5" /></Ico></Tool>
          <Grow />
          <Dots $w={20}><VDots /></Dots>
          <HScroll>
            <ScrollButton aria-label="Scroll left"><Ico w={3} h={5} c="none"><path d="M3 0v5L.5 2.500z" fill="#555" /></Ico></ScrollButton>
            <Track $dir="row"><Thumb $part={67} /></Track>
            <ScrollButton aria-label="Scroll right"><Ico w={3} h={5} c="none"><path d="M0 0v5l2.500-2.500z" fill="#555" /></Ico></ScrollButton>
          </HScroll>
        </SheetTabs>

        <StatusBar>
          READY
          <StatusButton $w={32} aria-label="Record macro"><Ico w={9} h={9} c="#fff"><path d="M.5 2.500h8v6h-8zM.5 4.500h8M3 2.500v6M5.700 2.500v6" strokeWidth=".8" /><circle cx="2" cy="2" r="1.600" fill="#fff" stroke="none" /></Ico></StatusButton>
          <Grow />
          <StatusButton $w={22} $on aria-label="Normal view"><Ico w={9} h={9} c="#fff"><path d="M.5 .5h8v8h-8zM.5 3.200h8M.5 5.800h8M3.200 .5v8M5.800 .5v8" strokeWidth=".9" /></Ico></StatusButton>
          <StatusButton $w={26} aria-label="Page layout view"><Ico w={10} h={9} c="#cfe3d8"><path d="M.5 .5h9v8h-9zM2.500 1v7M7.500 1v7M3.500 2.500h3M3.500 4.500h3M3.500 6.500h3" strokeWidth=".9" /></Ico></StatusButton>
          <StatusButton $w={26} aria-label="Page break view"><Ico w={10} h={9} c="#cfe3d8"><path d="M.5 .5h9v8h-9z" strokeWidth=".9" /><path d="M1 1h3v4H1zM5 1h2v4H5z" fill="#fff" stroke="none" /></Ico></StatusButton>
          <StatusButton $w={8} aria-label="Zoom out"><Ico w={5} h={5} c="#fff"><path d="M0 2.500h5" strokeWidth="1.200" /></Ico></StatusButton>
          <ZoomRange type="range" aria-label="Zoom" min={0} max={100} defaultValue={61} />
          <StatusButton $w={10} aria-label="Zoom in"><Ico w={5} h={5} c="#fff"><path d="M0 2.500h5M2.500 0v5" strokeWidth="1.200" /></Ico></StatusButton>
          <ZoomValue>175%</ZoomValue>
        </StatusBar>

        <Taskbar>
          <StartButton aria-label="Start"><Ico w={11} h={11} c="none"><path d="M0 1.600L4.800 1v4.200H0zM5.500 .9L11 0v5.200H5.500zM0 5.900h4.800V10L0 9.400zM5.500 5.900H11V11l-5.500-.9z" fill="#fff" /></Ico></StartButton>
          <SearchBox>
            <Ico w={11} h={11} c="#333"><circle cx="6.500" cy="4.500" r="3.600" strokeWidth="1.100" /><path d="M4 7L.7 10.300" strokeWidth="1.200" /></Ico>
            <input type="search" aria-label="Search" placeholder="Type here to search" />
          </SearchBox>
          <TaskButton aria-label="Cortana"><Ico w={16} h={16} c="#fff"><circle cx="8" cy="8" r="4.300" strokeWidth="1.500" /></Ico></TaskButton>
          <TaskButton aria-label="Task View"><Ico w={16} h={16} c="#ddd"><path d="M3 2.500v2h6.500v-2M3 13.500v-2h6.500v2M3 6.500h6.500v3H3zM12.500 2.500v11" /><path d="M12 5.500h1.500v2H12z" fill="#fff" /></Ico></TaskButton>
          <TaskButton $open aria-label="File Explorer"><FolderIcon /></TaskButton>
          <TaskButton $open aria-label="Word"><WordIcon /></TaskButton>
          <TaskButton $open aria-label="Chrome"><ChromeIcon /></TaskButton>
          <TaskButton aria-label="Zoom"><ZoomIcon /></TaskButton>
          <TaskButton $open $on aria-label="Excel"><ExcelIcon s={15} /></TaskButton>
          <TaskButton $open aria-label="Media"><DiscIcon /></TaskButton>
          <TaskButton $open aria-label="Camtasia"><CamIcon c="#5c9c1e" /></TaskButton>
          <TaskButton $open aria-label="Camtasia Recorder"><CamIcon c="#e0493e" /></TaskButton>
          <Tray>
            <TrayButton $w={16} aria-label="Hidden icons"><Ico w={9} h={6} c="#fff"><path d="M1 5l3.500-3.500L8 5" /></Ico></TrayButton>
            <TrayButton $w={16} aria-label="Dropbox"><Ico w={10} h={9} c="none"><path d="M2.700 0L5 1.500 2.700 3 .4 1.500zM7.300 0l2.300 1.500L7.300 3 5 1.500zM2.700 3.200L5 4.700 2.700 6.200.4 4.700zM7.300 3.200l2.300 1.500-2.300 1.500L5 4.700zM5 5.500l2.300 1.500L5 8.500 2.700 7z" fill="#fff" /></Ico></TrayButton>
            <TrayButton $w={16} aria-label="Volume"><Ico w={12} h={10} c="#fff"><path d="M.5 3.500H2L4.500 1v8L2 6.500H.5zM6 3.500c.8 1 .8 2 0 3M7.700 2.200c1.500 1.700 1.500 4 0 5.600M9.400 1c2.300 2.500 2.300 5.500 0 8" strokeWidth=".9" /></Ico></TrayButton>
            <Clock>4:29 PM<br />6/2/2020</Clock>
            <TrayButton $w={28} aria-label="Notifications, 2 new">
              <Ico w={16} h={16} c="none"><path d="M1 1h11v8H6.500L4 11.500V9H1z" fill="#fff" /><path d="M3 3.500h7M3 5.500h7" stroke="#201f1c" strokeWidth=".8" /><circle cx="11" cy="10.500" r="4.600" fill="#3a3936" stroke="#aaa" strokeWidth=".6" /><text x="11" y="13.200" textAnchor="middle" fontSize="8" fontFamily="Open Sans" fill="#fff">2</text></Ico>
            </TrayButton>
          </Tray>
        </Taskbar>
      </Desktop>
    </Screen>
  );
}
